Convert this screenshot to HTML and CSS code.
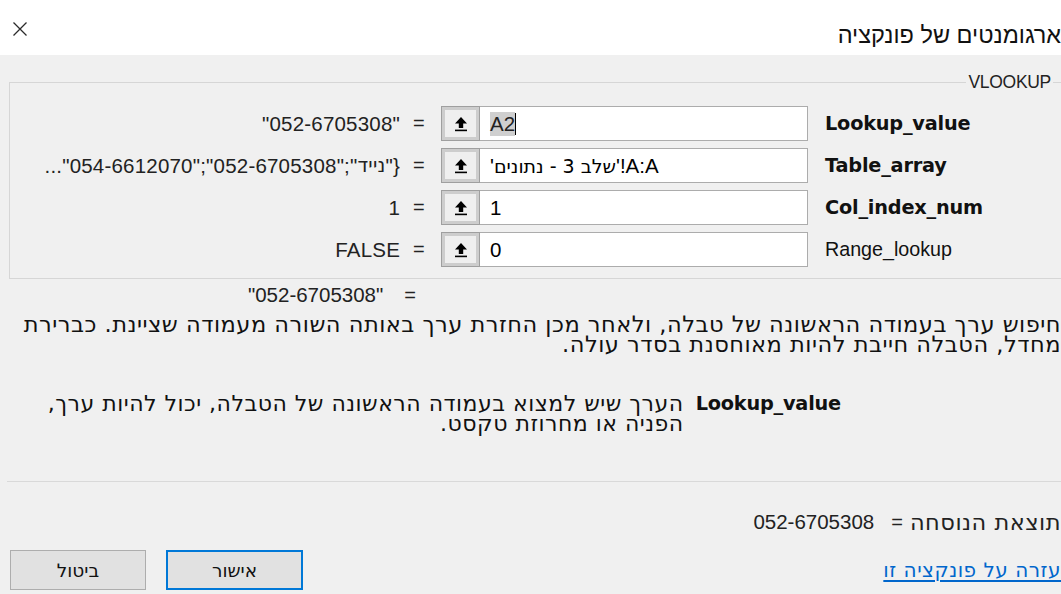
FILE: index.html
```html
<!DOCTYPE html>
<html lang="he" dir="rtl">
<head>
<meta charset="utf-8">
<title>ארגומנטים של פונקציה</title>
<link rel="stylesheet" href="styles.css">
</head>
<body>
<div class="dialog">
  <header class="titlebar">
    <h1 class="title">ארגומנטים של פונקציה</h1>
    <button class="close" type="button" aria-label="סגור">
      <svg width="16" height="16" viewBox="0 0 16 16"><path d="M1.5 1.5 L14.5 14.5 M14.5 1.5 L1.5 14.5" stroke="#2b2b2b" stroke-width="1.3" fill="none"/></svg>
    </button>
  </header>

  <main class="content">
    <fieldset class="args">
      <legend>VLOOKUP</legend>

      <div class="arg-row">
        <span class="arg-name strong">Lookup_value</span>
        <span class="arg-input"><span class="ref-text"><span class="sel">A2</span><span class="caret"></span></span></span>
        <span class="collapse"><svg width="14" height="16" viewBox="0 0 14 16"><path d="M7 1 L1 7.5 H4.8 V12 H9.2 V7.5 H13 Z" fill="#000"/><rect x="1" y="13.6" width="12" height="1.6" fill="#000"/></svg></span>
        <span class="eq">=</span>
        <span class="arg-value">"052-6705308"</span>
      </div>

      <div class="arg-row">
        <span class="arg-name strong">Table_array</span>
        <span class="arg-input"><span class="ref-text">'<span class="he">שלב 3 - נתונים</span>'!A:A</span></span>
        <span class="collapse"><svg width="14" height="16" viewBox="0 0 14 16"><path d="M7 1 L1 7.5 H4.8 V12 H9.2 V7.5 H13 Z" fill="#000"/><rect x="1" y="13.6" width="12" height="1.6" fill="#000"/></svg></span>
        <span class="eq">=</span>
        <span class="arg-value">{"<span class="he">נייד</span>";"052-6705308";"054-6612070"...</span>
      </div>

      <div class="arg-row">
        <span class="arg-name strong">Col_index_num</span>
        <span class="arg-input"><span class="ref-text">1</span></span>
        <span class="collapse"><svg width="14" height="16" viewBox="0 0 14 16"><path d="M7 1 L1 7.5 H4.8 V12 H9.2 V7.5 H13 Z" fill="#000"/><rect x="1" y="13.6" width="12" height="1.6" fill="#000"/></svg></span>
        <span class="eq">=</span>
        <span class="arg-value">1</span>
      </div>

      <div class="arg-row">
        <span class="arg-name">Range_lookup</span>
        <span class="arg-input"><span class="ref-text">0</span></span>
        <span class="collapse"><svg width="14" height="16" viewBox="0 0 14 16"><path d="M7 1 L1 7.5 H4.8 V12 H9.2 V7.5 H13 Z" fill="#000"/><rect x="1" y="13.6" width="12" height="1.6" fill="#000"/></svg></span>
        <span class="eq">=</span>
        <span class="arg-value">FALSE</span>
      </div>
    </fieldset>

    <div class="func-result">
      <span class="eq">=</span>
      <span class="func-value">"052-6705308"</span>
    </div>

    <p class="func-desc">
      <span class="line">חיפוש ערך בעמודה הראשונה של טבלה, ולאחר מכן החזרת ערך באותה השורה מעמודה שציינת. כברירת</span>
      <span class="line">מחדל, הטבלה חייבת להיות מאוחסנת בסדר עולה.</span>
    </p>

    <div class="arg-help">
      <span class="arg-help-name">Lookup_value</span>
      <p class="arg-help-text">
        <span class="line">הערך שיש למצוא בעמודה הראשונה של הטבלה, יכול להיות ערך,</span>
        <span class="line">הפניה או מחרוזת טקסט.</span>
      </p>
    </div>

    <div class="divider"></div>

    <div class="formula-result">
      <span class="he">תוצאת הנוסחה</span>
      <span class="eq">=</span>
      <span class="formula-value">052-6705308</span>
    </div>

    <footer class="actions">
      <a class="help-link" href="#">עזרה על פונקציה זו</a>
      <div class="buttons">
        <button class="btn btn-default" type="button">אישור</button>
        <button class="btn" type="button">ביטול</button>
      </div>
    </footer>
  </main>
</div>
</body>
</html>
```

FILE: styles.css
```css
html {
  background: #f0f0f0;
}

body {
  margin: 0;
  width: 1061px;
  height: 594px;
  overflow: hidden;
  font-family: "Liberation Sans", Arial, sans-serif;
  color: #000;
  background: #f0f0f0;
}

/* Hebrew runs use the wider DejaVu glyphs */
.he {
  font-family: "DejaVu Sans", "Liberation Sans", sans-serif;
}

.dialog {
  display: flex;
  flex-direction: column;
  height: 594px;
}

/* ---------- title bar ---------- */
.titlebar {
  height: 55px;
  flex: none;
  background: #fff;
  display: flex;
  justify-content: space-between;
  align-items: flex-start;
}

.title {
  margin: 0;
  padding-top: 22px;
  font-size: 23.5px;
  font-weight: normal;
  line-height: 26px;
  color: #111;
  white-space: nowrap;
}

.close {
  margin: 21px 0 0 12px;
  padding: 0;
  border: 0;
  background: none;
  width: 16px;
  height: 16px;
  display: flex;
}

/* ---------- body ---------- */
.content {
  flex: 1;
  display: flex;
  flex-direction: column;
  padding: 0;
  padding-inline-end: 9px;
}

.args {
  margin: 19px -9px 0 0;
  padding: 15px 16px 11px 0;
  border: 1px solid #d6d6d6;
  min-width: 0;
  display: grid;
  grid-template-columns: 1fr 328px 39px 41px 390px;
  row-gap: 7px;
}

.args legend {
  padding: 0 2px;
  font-size: 17.5px;
  line-height: 17px;
  color: #222;
  letter-spacing: -0.3px;
}

.arg-row {
  display: contents;
}

.arg-row > * {
  height: 35px;
  display: flex;
  align-items: center;
}

.arg-name {
  direction: ltr;
  justify-content: flex-start;
  padding-left: 17px;
  font-size: 19.7px;
  color: #111;
  white-space: nowrap;
}

.arg-name.strong {
  font-family: "DejaVu Sans", Verdana, sans-serif;
  font-weight: bold;
  font-size: 19.3px;
  letter-spacing: -0.2px;
}

.arg-input {
  box-sizing: border-box;
  background: #fff;
  border: 1px solid #acacac;
  border-left: 0;
  direction: ltr;
  justify-content: flex-start;
  padding-left: 10px;
  overflow: hidden;
}

.ref-text {
  font-size: 20.5px;
  white-space: nowrap;
  unicode-bidi: isolate;
  display: flex;
  align-items: center;
}

.ref-text .he {
  font-size: 19px;
}

.sel {
  background: #cfcfcf;
  color: #222;
}

.caret {
  display: inline-block;
  width: 1px;
  height: 22px;
  background: #000;
}

.collapse {
  box-sizing: border-box;
  justify-content: center;
  background: #efefef;
  border: 1px solid #9f9f9f;
  box-shadow: inset 0 0 0 3px #cdcdcd;
}

.eq {
  font-size: 20px;
  direction: ltr;
  justify-content: flex-start;
  padding-left: 13px;
  color: #222;
}

.arg-value {
  justify-content: flex-start;
  font-size: 20.5px;
  letter-spacing: 0.2px;
  white-space: nowrap;
  overflow: hidden;
  color: #222;
}

.arg-value .he {
  font-size: 19.5px;
}

/* ---------- function summary ---------- */
.func-result {
  display: flex;
  align-items: center;
  gap: 21px;
  margin: 6px 645px 0 0;
  height: 20px;
  font-size: 20.5px;
  color: #222;
}

.func-result .eq {
  padding: 0;
}

.line {
  display: block;
  height: 20px;
}

.func-desc {
  margin: 9px 0 0 0;
  font-family: "DejaVu Sans", "Liberation Sans", sans-serif;
  font-size: 22.5px;
  letter-spacing: 0.5px;
  line-height: 20px;
  white-space: nowrap;
  color: #111;
}

.arg-help {
  display: flex;
  align-items: flex-start;
  gap: 12px;
  margin: 40px 220px 0 0;
}

.arg-help-name {
  font-family: "DejaVu Sans", Verdana, sans-serif;
  font-weight: bold;
  font-size: 19.3px;
  line-height: 20px;
  letter-spacing: -0.2px;
  color: #111;
}

.arg-help-text {
  margin: 0;
  font-family: "DejaVu Sans", "Liberation Sans", sans-serif;
  font-size: 22px;
  letter-spacing: 0.5px;
  line-height: 20px;
  white-space: nowrap;
  color: #111;
}

.divider {
  margin: 47px 0 0 -2px;
  height: 1px;
  background: #d9d9d9;
}

.formula-result {
  display: flex;
  align-items: center;
  margin: 30px 0 0 0;
  height: 20px;
  font-size: 20.5px;
  color: #222;
}

.formula-result .he {
  font-size: 22.5px;
  letter-spacing: 0.5px;
}

.formula-result .eq {
  padding: 0 7px 0 17px;
}

/* ---------- footer ---------- */
.actions {
  margin: auto 0 4px 1px;
  display: flex;
  justify-content: space-between;
  align-items: center;
}

.help-link {
  font-family: "DejaVu Sans", "Liberation Sans", sans-serif;
  font-size: 20px;
  letter-spacing: 0.5px;
  color: #0066cc;
  text-decoration: underline;
  text-underline-offset: 3px;
}

.buttons {
  display: flex;
  gap: 20px;
}

.btn {
  box-sizing: border-box;
  width: 136px;
  height: 40px;
  background: #e1e1e1;
  border: 1px solid #adadad;
  font-family: "DejaVu Sans", "Liberation Sans", sans-serif;
  font-size: 18.5px;
  color: #111;
  padding: 0;
}

.btn-default {
  width: 137px;
  border: 2px solid #0078d7;
}
```
